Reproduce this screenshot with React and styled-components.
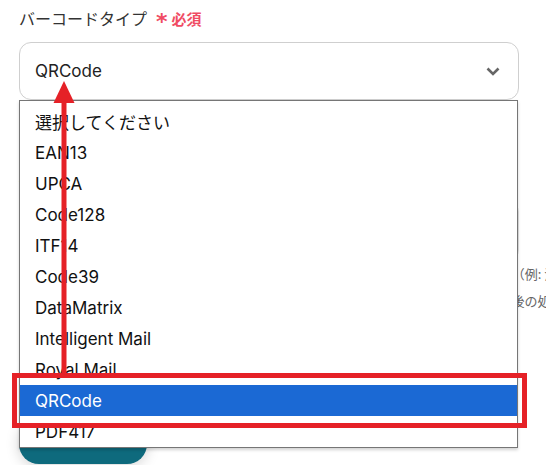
import React from 'react'
import styled, { createGlobalStyle } from 'styled-components'

const GlobalStyle = createGlobalStyle`
  html, body {
    margin: 0;
    padding: 0;
    background: #fff;
    overflow: hidden;
  }
  body {
    font-family: Inter, "Noto Sans CJK JP", sans-serif;
    color: #222;
  }
`

const Page = styled.div`
  position: relative;
  width: 546px;
  height: 465px;
  padding: 6px 19px 0;
  box-sizing: border-box;
  overflow: hidden;
`

const Label = styled.div`
  display: flex;
  align-items: center;
  gap: 9px;
  height: 24px;
  font-size: 16px;
  color: #333;
  font-family: "Noto Sans CJK JP", sans-serif;
`

const Required = styled.span`
  display: flex;
  align-items: center;
  gap: 4px;
  color: #f04b63;
  font-size: 15px;
  font-weight: 700;
`

const Star = styled.span`
  font-size: 22px;
  line-height: 1;
  margin-top: 7px;
  font-family: "DejaVu Sans", sans-serif;
`

const SelectWrap = styled.div`
  position: relative;
  margin-top: 12px;
  width: 500px;
`

const SelectBox = styled.div`
  display: flex;
  align-items: center;
  justify-content: space-between;
  height: 58px;
  box-sizing: border-box;
  padding: 0 18px 0 15px;
  border: 1px solid #cfcfcf;
  border-radius: 12px;
  font-size: 17px;
  color: #222;
`

const Listbox = styled.ul`
  position: absolute;
  top: 100%;
  left: 0;
  width: 499px;
  box-sizing: border-box;
  margin: 0;
  padding: 5px 0 0;
  list-style: none;
  background: #fff;
  border: 1px solid #767676;
  box-shadow: 0 2px 3px rgba(0, 0, 0, 0.18);
  z-index: 2;
`

const Option = styled.li`
  display: flex;
  align-items: center;
  height: 31px;
  padding-left: 15px;
  font-size: 17px;
  color: ${p => (p.$selected ? '#fff' : '#111')};
  background: ${p => (p.$selected ? '#1b69d4' : 'transparent')};
`

const FieldLabel = styled.div`
  margin-top: 70px;
  font-size: 16px;
  color: #333;
  font-family: "Noto Sans CJK JP", sans-serif;
`

const Input = styled.div`
  margin-top: 8px;
  width: 500px;
  height: 58px;
  box-sizing: border-box;
  border: 1px solid #e2e2e2;
  border-radius: 10px;
`

const Hint = styled.p`
  margin: 0;
  font-size: 13px;
  line-height: 27px;
  color: #666;
  white-space: nowrap;
  font-family: "Noto Sans CJK JP", sans-serif;
`

const Button = styled.div`
  margin-top: 106px;
  width: 128px;
  height: 44px;
  border-radius: 20px;
  background: #0e6a7d;
  box-shadow: 0 2px 14px rgba(0, 0, 0, 0.18);
`

const Highlight = styled.div`
  position: absolute;
  left: 12px;
  top: 373px;
  width: 515px;
  height: 55px;
  box-sizing: border-box;
  border: 5px solid #e52127;
  z-index: 3;
`

const Arrow = styled.svg`
  position: absolute;
  left: 0;
  top: 0;
  z-index: 3;
  pointer-events: none;
`

const Chevron = () => (
  <svg width="14" height="9" viewBox="0 0 14 9">
    <polyline points="1.5,1.5 7,7 12.5,1.5" fill="none" stroke="#666" strokeWidth="2.6" />
  </svg>
)

const options = [
  '選択してください',
  'EAN13',
  'UPCA',
  'Code128',
  'ITF14',
  'Code39',
  'DataMatrix',
  'Intelligent Mail',
  'Royal Mail',
  'QRCode',
  'PDF417',
]

const App = () => (
  <Page>
    <GlobalStyle />
    <Label>
      バーコードタイプ
      <Required>
        <Star>*</Star>必須
      </Required>
    </Label>
    <SelectWrap>
      <SelectBox>
        QRCode
        <Chevron />
      </SelectBox>
      <Listbox>
        {options.map(o => (
          <Option key={o} $selected={o === 'QRCode'}>{o}</Option>
        ))}
      </Listbox>
    </SelectWrap>
    <FieldLabel>値</FieldLabel>
    <Input />
    <Hint>バーコードに変換する値を入力してください。アウトプットを使用して動的にも設定（例: 注文番号）</Hint>
    <Hint>を指定できます。入力された文字列はエンコードされ、画像ファイルとして生成され後の処理で利用できます。</Hint>
    <Button />
    <Highlight />
    <Arrow width="546" height="465">
      <polygon points="64,81 53.5,103 74.5,103" fill="#e52127" />
      <rect x="61.5" y="102" width="5" height="272" fill="#e52127" />
    </Arrow>
  </Page>
)

export default App
